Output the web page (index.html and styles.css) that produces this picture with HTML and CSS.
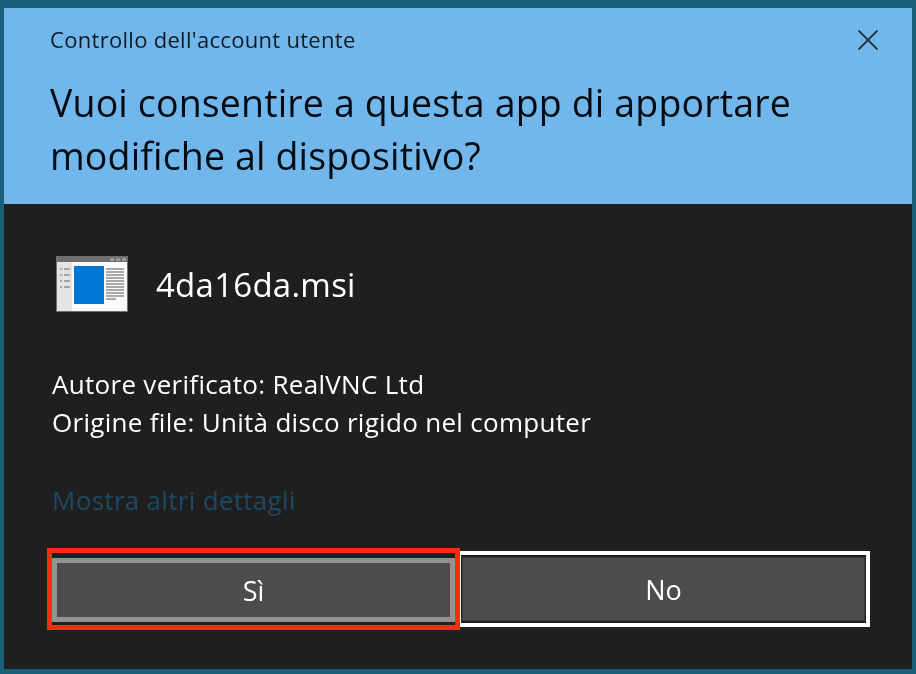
FILE: index.html
```html
<!DOCTYPE html>
<html lang="it">
<head>
<meta charset="utf-8">
<title>Controllo dell'account utente</title>
<link rel="stylesheet" href="styles.css">
</head>
<body>
<main class="dialog">
  <header class="header">
    <div class="topline">
      <span class="caption">Controllo dell'account utente</span>
      <svg class="close" width="20" height="20" viewBox="0 0 20 20" aria-label="Chiudi">
        <path d="M0.5 0.5L19.5 19.5M19.5 0.5L0.5 19.5" fill="none" stroke="#1f2c36" stroke-width="1.8"/>
      </svg>
    </div>
    <h1 class="question">Vuoi consentire a questa app di apportare modifiche al dispositivo?</h1>
  </header>
  <section class="body">
    <div class="app">
      <svg class="appicon" width="72" height="56" viewBox="0 0 72 56">
        <rect x="0" y="0" width="72" height="56" fill="#6f6f6f"/>
        <rect x="1" y="6" width="70" height="49" fill="#fafafa"/>
        <rect x="1" y="6" width="15" height="49" fill="#e4e4e4"/>
        <rect x="54" y="2" width="4" height="3" fill="#9a9a9a"/>
        <rect x="60" y="2" width="4" height="3" fill="#9a9a9a"/>
        <rect x="66" y="2" width="4" height="3" fill="#9a9a9a"/>
        <g fill="#a6a6a6">
          <rect x="4" y="12" width="2" height="2"/><rect x="8" y="12" width="6" height="2"/>
          <rect x="4" y="18" width="2" height="2"/><rect x="8" y="18" width="6" height="2"/>
          <rect x="4" y="24" width="2" height="2"/><rect x="8" y="24" width="6" height="2"/>
          <rect x="4" y="30" width="2" height="2"/><rect x="8" y="30" width="6" height="2"/>
        </g>
        <rect x="18" y="10" width="30" height="38" fill="#0078d7"/>
        <g fill="#a8a8a8">
          <rect x="50" y="12" width="18" height="2"/>
          <rect x="50" y="15" width="18" height="2"/>
          <rect x="50" y="18" width="18" height="2"/>
          <rect x="50" y="21" width="18" height="2"/>
          <rect x="50" y="24" width="18" height="2"/>
          <rect x="50" y="27" width="18" height="2"/>
          <rect x="50" y="30" width="18" height="2"/>
          <rect x="50" y="33" width="18" height="2"/>
          <rect x="50" y="36" width="18" height="2"/>
          <rect x="50" y="39" width="18" height="2"/>
          <rect x="50" y="42" width="10" height="2"/>
        </g>
      </svg>
      <span class="appname">4da16da.msi</span>
    </div>
    <div class="info">
      <p>Autore verificato: RealVNC Ltd</p>
      <p>Origine file: Unità disco rigido nel computer</p>
    </div>
    <a class="more">Mostra altri dettagli</a>
    <div class="actions">
      <div class="highlight"><button class="btn btn-yes">Sì</button></div>
      <div class="focus"><button class="btn btn-no">No</button></div>
    </div>
  </section>
</main>
</body>
</html>
```
FILE: styles.css
```css
* { box-sizing: border-box; }
html, body { margin: 0; height: 100%; }
body {
  background: #19607a;
  padding: 8px 4px 5px;
  font-family: "Open Sans", "Noto Sans", sans-serif;
  overflow: hidden;
}
.dialog {
  height: 661px;
  display: flex;
  flex-direction: column;
  background: #1f1f1f;
  filter: blur(0.45px);
}
.header {
  height: 196px;
  flex: none;
  background: #72b7ec;
  color: #030a10;
  padding: 16px 34px 0 46px;
}
.topline {
  display: flex;
  justify-content: space-between;
  align-items: center;
  height: 30px;
}
.caption { font-size: 22px; letter-spacing: 0.3px; color: #0e1a24; }
.close { flex: none; margin-top: 2px; }
.question {
  margin: 22px 0 0;
  font-size: 37.5px;
  font-weight: 400;
  line-height: 53px;
  letter-spacing: 0.15px;
  width: 790px;
}
.body {
  flex: 1;
  padding: 52px 42px 0 43px;
  color: #fff;
  display: flex;
  flex-direction: column;
}
.app { display: flex; align-items: center; gap: 28px; margin-left: 9px; height: 56px; }
.appicon { flex: none; }
.appname { font-size: 33px; letter-spacing: 0.25px; }
.info { margin: 53px 0 0 5px; font-size: 26px; line-height: 38px; letter-spacing: 0.3px; }
.info p { margin: 0; }
.more { margin: 40px 0 0 5px; font-size: 26px; line-height: 38px; letter-spacing: 0.3px; color: #1d4a64; }
.actions { margin-top: 29px; display: flex; align-items: center; }
.highlight {
  width: 413px;
  height: 82px;
  flex: none;
  border: 5px solid #ff2a12;
  padding: 5px 0 3px 0;
  position: relative;
  z-index: 1;
}
.focus {
  flex: 1;
  height: 76px;
  border: 4px solid #fff;
  padding: 2px 1px;
  margin-left: -3px;
}
.btn {
  display: block;
  width: 100%;
  height: 100%;
  font-family: inherit;
  font-size: 27px;
  color: #fff;
  background: #4d4d4d;
  padding: 0;
  border: 0;
}
.btn-yes { border: 5px solid #939393; }
.btn-no { border: 1px solid #3a3a3a; }
```
